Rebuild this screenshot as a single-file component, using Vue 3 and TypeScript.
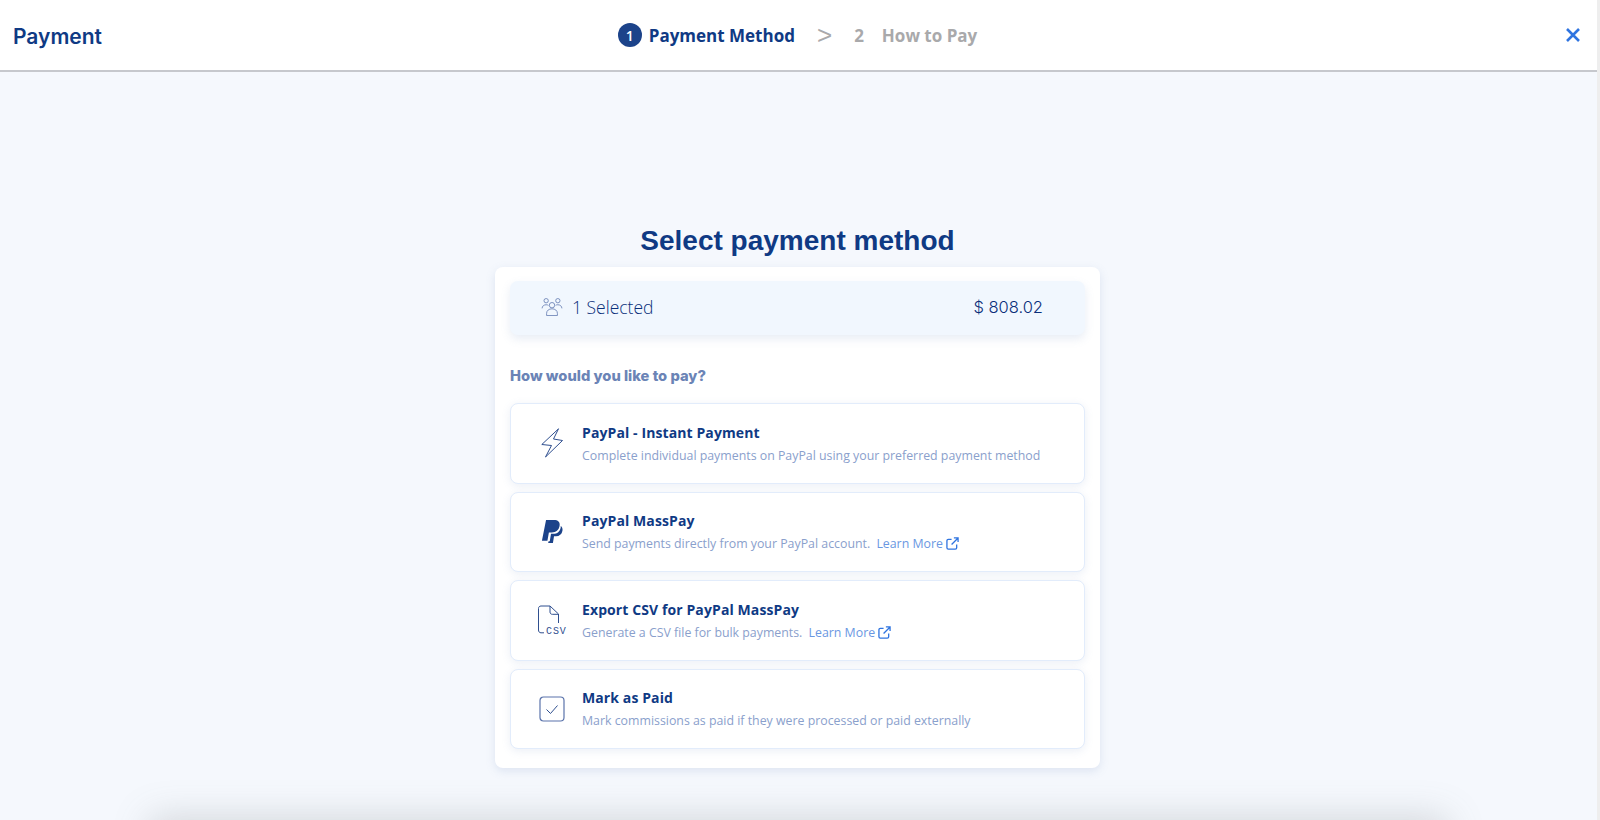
<template>
  <div class="page">
    <header class="topbar">
      <div class="brand">Payment</div>
      <nav class="steps">
        <span class="step-num">1</span>
        <span class="step-label active">Payment Method</span>
        <span class="step-sep">&gt;</span>
        <span class="step-idle">2</span>
        <span class="step-label idle">How to Pay</span>
      </nav>
      <svg class="close" viewBox="0 0 14 14" width="14" height="14">
        <path d="M1 1 13 13M13 1 1 13" fill="none" stroke="#2f74e0" stroke-width="2.6" />
      </svg>
    </header>

    <main class="content">
      <h1 class="title">Select payment method</h1>
      <section class="card">
        <div class="summary">
          <div class="summary-left">
            <svg class="people" viewBox="0 0 24 20" width="22" height="18" fill="none" stroke="#6f86b8" stroke-width="1">
              <circle cx="5.500" cy="3" r="2.400" />
              <circle cx="18.500" cy="3" r="2.400" />
              <circle cx="12" cy="8" r="3" />
              <path d="M1 11.500c0-2.400 2-4 4.500-4 1 0 1.800.2 2.500.7M16 8.100c.6-.4 1.500-.6 2.500-.6 2.500 0 4.500 1.600 4.500 4" />
              <path d="M6 19.500v-2.500c0-3 2.600-5 6-5s6 2 6 5v2.500z" />
            </svg>
            <span>1 Selected</span>
          </div>
          <span class="amount">$ 808.02</span>
        </div>

        <h2 class="question">How would you like to pay?</h2>

        <div class="methods">
          <div class="method" v-for="m in methods" :key="m.title">
            <div class="method-icon">
              <svg v-if="m.icon === 'bolt'" viewBox="0 0 22 30" width="22" height="30" fill="none" stroke="#2f4f8f" stroke-width="1" stroke-linejoin="round">
                <path d="M17.500.8.800 16.500l9.700 1-6 11.500 17-16.500-9-1.500z" />
              </svg>
              <svg v-else-if="m.icon === 'paypal'" viewBox="0 0 24 28" width="22" height="26">
                <path fill="#1c438a" d="M5.500 1h8.500c4.500 0 7 2.200 6.300 6.200-.8 4.800-4 7.300-8.500 7.300H8.600L7 23.500H1z" />
                <path fill="#1c438a" d="M21.500 7.500c1.600 1 2.300 2.800 1.900 5-.7 4-3.400 6-7 6h-2.200l-1.200 7.500H7.800l.5-2h1.300l1.300-8h2.500c4.300 0 7.300-2.600 8.100-7z" />
              </svg>
              <svg v-else-if="m.icon === 'csv'" viewBox="0 0 30 30" width="30" height="30" fill="none" stroke="#2f4f8f" stroke-width="1">
                <path d="M1.500 25V3.500C1.500 2 2.500 1 4 1H13l8.500 8v9" />
                <path d="M13 1v6c0 1.500 1 2.300 2.300 2.300H21.500" />
                <path d="M1.500 25c0 1.800 1 2.800 2.500 2.800H7" />
                <text x="9" y="28.500" class="csv-text">CSV</text>
              </svg>
              <svg v-else viewBox="0 0 26 26" width="26" height="26" fill="none" stroke="#5a73ab">
                <rect x="1" y="1" width="24" height="24" rx="3.500" stroke-width="1.200" />
                <path d="M7.500 13.500 11.500 17.500 18.500 9.500" stroke="#2f4f8f" stroke-width="1" />
              </svg>
            </div>
            <div class="method-body">
              <div class="method-title">{{ m.title }}</div>
              <div class="method-desc">
                {{ m.desc }}
                <span v-if="m.link" class="learn">
                  Learn More
                  <svg viewBox="0 0 14 14" width="13" height="13" fill="none" stroke="#2f74e0" stroke-width="1.400">
                    <path d="M6 2.500H2.500c-.9 0-1.500.6-1.500 1.500v7.500c0 .9.6 1.500 1.500 1.500H10c.9 0 1.500-.6 1.500-1.500V8" />
                    <path d="M6 8 13 1M8.500 1H13v4.500" />
                  </svg>
                </span>
              </div>
            </div>
          </div>
        </div>
      </section>
    </main>

    <div class="edge-shadow"></div>
  </div>
</template>

<script setup lang="ts">
interface Method {
  title: string;
  desc: string;
  icon: "bolt" | "paypal" | "csv" | "check";
  link?: boolean;
}

const methods: Method[] = [
  {
    title: "PayPal - Instant Payment",
    desc: "Complete individual payments on PayPal using your preferred payment method",
    icon: "bolt"
  },
  {
    title: "PayPal MassPay",
    desc: "Send payments directly from your PayPal account.",
    icon: "paypal",
    link: true
  },
  {
    title: "Export CSV for PayPal MassPay",
    desc: "Generate a CSV file for bulk payments.",
    icon: "csv",
    link: true
  },
  {
    title: "Mark as Paid",
    desc: "Mark commissions as paid if they were processed or paid externally",
    icon: "check"
  }
];
</script>

<style>
html,
body {
  margin: 0;
  background: #f5f8fd;
}
</style>

<style scoped>
.page {
  position: relative;
  box-sizing: border-box;
  width: 1600px;
  height: 820px;
  overflow: hidden;
  border-right: 3px solid #eeeeee;
  background: #f5f8fd;
  font-family: "Open Sans", sans-serif;
}

.topbar {
  display: grid;
  grid-template-columns: 1fr auto 1fr;
  align-items: center;
  height: 70px;
  padding: 0 17px 0 13px;
  background: #fff;
  border-bottom: 2px solid #c6c8cd;
}

.brand {
  margin-top: 2px;
  font-family: Inter, sans-serif;
  font-size: 21px;
  font-weight: 600;
  color: #0f3a84;
}

.steps {
  display: flex;
  align-items: center;
  padding-left: 2px;
  font-size: 17px;
  font-weight: 700;
}

.step-num {
  display: flex;
  align-items: center;
  justify-content: center;
  width: 24px;
  height: 24px;
  margin-right: 7px;
  border-radius: 50%;
  background: #1c438a;
  color: #fff;
  font-size: 14px;
  font-weight: 600;
}

.active {
  color: #0f3a84;
}

.step-sep {
  margin: 0 22px;
  font-family: "Liberation Sans", sans-serif;
  font-size: 26px;
  line-height: 26px;
  font-weight: 400;
  color: #a9a9ab;
}

.step-idle {
  margin-right: 18px;
  color: #a9a9ab;
}

.idle {
  color: #a9a9ab;
}

.close {
  display: block;
  justify-self: end;
}

.content {
  display: flex;
  flex-direction: column;
  align-items: center;
  padding: 151px 2px 0 0;
}

.title {
  margin: 0 0 8px;
  font-family: "Liberation Sans", sans-serif;
  font-size: 28px;
  line-height: 36px;
  font-weight: 700;
  color: #0f3a84;
}

.card {
  box-sizing: border-box;
  width: 605px;
  height: 501px;
  padding: 14px 15px;
  border-radius: 8px;
  background: #fff;
  box-shadow: 0 3px 10px rgba(110, 140, 190, 0.18);
}

.summary {
  display: flex;
  align-items: center;
  justify-content: space-between;
  height: 54px;
  padding: 0 42px 2px 31px;
  box-sizing: border-box;
  border-radius: 8px;
  background: #f1f7fe;
  box-shadow: 0 4px 10px rgba(110, 140, 190, 0.16);
  font-size: 17.500px;
  font-weight: 300;
  color: #0a2f7a;
}

.summary-left {
  display: flex;
  align-items: center;
  gap: 9px;
}

.amount {
  font-family: Inter, sans-serif;
  font-size: 16.500px;
  font-weight: 300;
}

.question {
  margin: 31px 0 17px;
  font-family: Inter, sans-serif;
  font-size: 14.700px;
  line-height: 20px;
  font-weight: 800;
  color: #6b84b6;
}

.methods {
  display: flex;
  flex-direction: column;
  gap: 8px;
}

.method {
  display: flex;
  align-items: center;
  box-sizing: border-box;
  height: 80.500px;
  border: 1px solid #e2ecfb;
  border-radius: 8px;
  background: #fff;
  box-shadow: 0 2px 8px rgba(110, 140, 190, 0.14);
}

.method-icon {
  display: flex;
  align-items: center;
  justify-content: center;
  box-sizing: border-box;
  flex: none;
  width: 71px;
  padding-left: 11px;
}

.method-icon svg {
  display: block;
}

.csv-text {
  font-family: "Liberation Mono", monospace;
  font-size: 10px;
  font-weight: 400;
  letter-spacing: 0.9px;
  fill: #2f4f8f;
  stroke: none;
}

.method-body {
  flex: 1;
  margin-top: 1px;
}

.method-title {
  font-size: 14px;
  line-height: 20px;
  font-weight: 700;
  letter-spacing: 0.1px;
  color: #0f3a84;
}

.method-desc {
  margin-top: 4px;
  font-size: 12.350px;
  line-height: 18px;
  color: #8aa0cc;
}

.learn {
  margin-left: 3px;
  color: #6a97e2;
}

.learn svg {
  vertical-align: -2px;
}

.edge-shadow {
  position: absolute;
  left: 160px;
  right: 160px;
  bottom: -38px;
  height: 30px;
  box-shadow: 0 0 36px 10px rgba(110, 115, 115, 0.26);
  pointer-events: none;
}
</style>
